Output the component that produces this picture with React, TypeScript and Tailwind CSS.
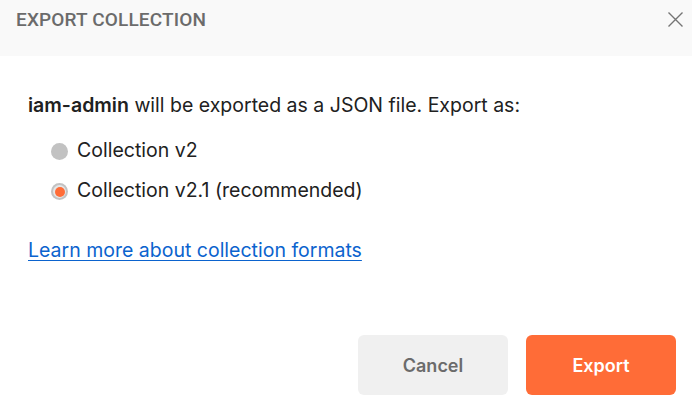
export default function App() {
  return (
    <div className="w-[692px] h-[403px] bg-white overflow-hidden font-['Inter','Liberation_Sans',sans-serif]">
      <div className="h-[56px] bg-[#f9f9f9] flex items-start justify-between pl-4 pr-[9px] pt-[9px]">
        <h2 className="font-['Roboto',sans-serif] font-medium text-[19px] leading-[22px] text-[#6b6b6b] tracking-[0.15px]">
          EXPORT COLLECTION
        </h2>
        <button className="w-[15px] h-[15px] mt-[3px]">
          <svg viewBox="0 0 15 15" className="w-[15px] h-[15px]">
            <path d="M0.5 0.5 L14.5 14.5 M14.5 0.5 L0.5 14.5" stroke="#757575" strokeWidth="1.4" fill="none" />
          </svg>
        </button>
      </div>

      <div className="pl-7 pt-[37px] text-[19.5px] leading-[24px] text-[#212121]">
        <p>
          <span className="font-semibold">iam-admin</span> will be exported as a JSON file. Export as:
        </p>

        <div className="mt-[21px] pl-[23px] flex flex-col gap-[16px]">
          <label className="flex items-start gap-[9px]">
            <span className="mt-[5px] w-[17px] h-[17px] rounded-full bg-[#c2c2c2]" />
            <span>Collection v2</span>
          </label>
          <label className="flex items-start gap-[9px]">
            <span className="mt-[5px] w-[17px] h-[17px] rounded-full bg-[#c2c2c2] flex items-center justify-center">
              <span className="w-[13px] h-[13px] rounded-full bg-[#e6e6e6] flex items-center justify-center">
                <span className="w-[10px] h-[10px] rounded-full bg-[#ff6c37]" />
              </span>
            </span>
            <span>Collection v2.1 (recommended)</span>
          </label>
        </div>

        <a href="#" className="inline-block mt-[36px] text-[#0b63ce] underline underline-offset-[3px]">
          Learn more about collection formats
        </a>
      </div>

      <div className="flex justify-end gap-[18px] pr-4 mt-[73px]">
        <button className="w-[150px] h-[60px] rounded-md bg-[#f0f0f0] text-[#6b6b6b] font-semibold text-[18px]">
          Cancel
        </button>
        <button className="w-[150px] h-[60px] rounded-md bg-[#ff6c37] text-white font-semibold text-[18px]">
          Export
        </button>
      </div>
    </div>
  );
}
